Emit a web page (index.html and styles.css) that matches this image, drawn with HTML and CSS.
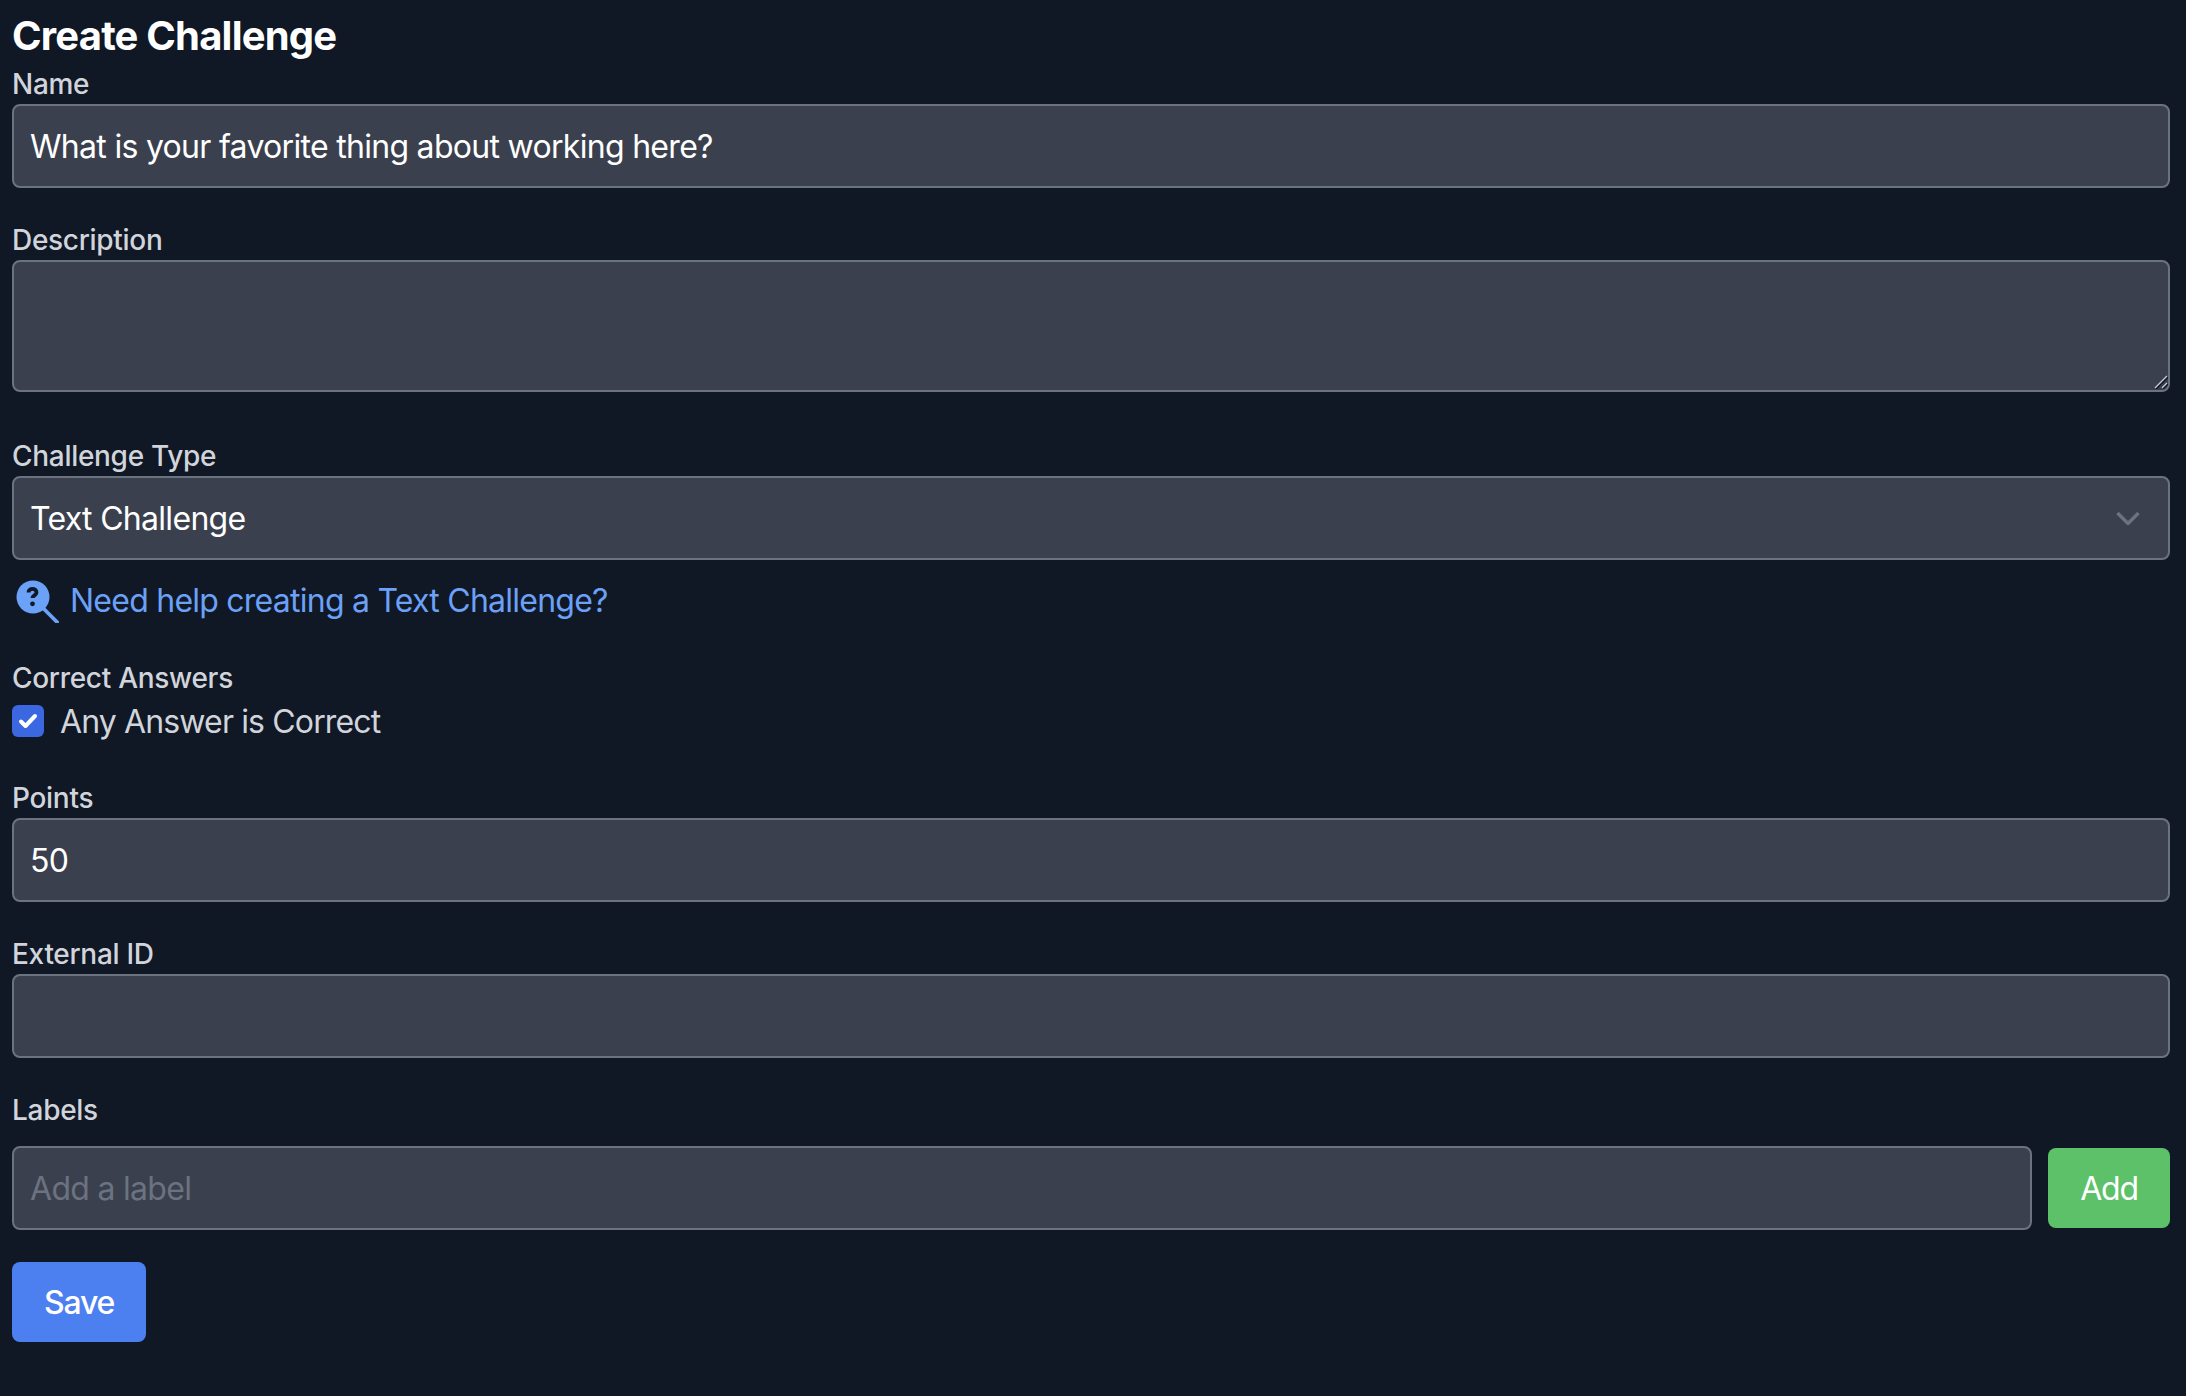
FILE: index.html
```html
<!DOCTYPE html>
<html lang="en">
<head>
  <meta charset="UTF-8" />
  <title>Create Challenge</title>
  <link rel="stylesheet" href="styles.css">
</head>
<body>
  <form class="challenge-form">
    <h1 class="form-title">Create Challenge</h1>

    <div class="field">
      <label class="field-label" for="name">Name</label>
      <input class="text-input" id="name" type="text" value="What is your favorite thing about working here?">
    </div>

    <div class="field field-description">
      <label class="field-label" for="description">Description</label>
      <div class="textarea-wrap">
        <textarea class="text-input text-area" id="description"></textarea>
        <svg class="resize-handle" width="14" height="14" viewBox="0 0 14 14" aria-hidden="true">
          <path d="M1 13 13 1M8 13l5-5" fill="none" stroke="#0f1420" stroke-width="2" transform="translate(.8 .8)"/>
          <path d="M1 13 13 1M8 13l5-5" fill="none" stroke="#c9ccd3" stroke-width="1.4"/>
        </svg>
      </div>
    </div>

    <div class="field-type">
      <label class="field-label" for="type">Challenge Type</label>
      <div class="select-wrap">
        <select class="text-input select-input" id="type">
          <option>Text Challenge</option>
          <option>Photo Challenge</option>
        </select>
        <svg class="select-arrow" width="24" height="14" viewBox="0 0 24 14" aria-hidden="true">
          <path d="M1.500 2 12 12.500 22.500 2" fill="none" stroke="#6b7280" stroke-width="3.400"/>
        </svg>
      </div>
    </div>

    <a class="help-link" href="#help">
      <svg class="help-icon" width="44" height="44" viewBox="0 0 44 44" aria-hidden="true">
        <circle cx="18" cy="18" r="16.5" fill="#6ba1f7"/>
        <path d="M29 30l13 13" stroke="#6ba1f7" stroke-width="3.800" stroke-linecap="round"/>
        <path d="M13.500 13.500c0-4.800 8-4.800 8 0 0 2.700-4 3-4 5.500" fill="none" stroke="#111827" stroke-width="3.800"/>
        <circle cx="17.500" cy="24.800" r="2.400" fill="#111827"/>
      </svg>
      <span class="help-text">Need help creating a Text Challenge?</span>
    </a>

    <div class="field-answers">
      <div class="field-label">Correct Answers</div>
      <label class="check-row">
        <span class="check-box">
          <svg width="20" height="16" viewBox="0 0 20 16" aria-hidden="true">
            <path d="M3 8.500l4.500 4.500L17 3" fill="none" stroke="#fff" stroke-width="4" stroke-linecap="round" stroke-linejoin="round"/>
          </svg>
        </span>
        <span>Any Answer is Correct</span>
      </label>
    </div>

    <div class="field">
      <label class="field-label" for="points">Points</label>
      <input class="text-input" id="points" type="text" value="50">
    </div>

    <div class="field">
      <label class="field-label" for="external">External ID</label>
      <input class="text-input" id="external" type="text">
    </div>

    <div class="field">
      <label class="field-label field-label-spaced" for="labels">Labels</label>
      <div class="label-row">
        <input class="text-input" id="labels" type="text" placeholder="Add a label">
        <button class="btn btn-add" type="button">Add</button>
      </div>
    </div>

    <button class="btn btn-save" type="button">Save</button>
  </form>
</body>
</html>
```
FILE: styles.css
```css
* {
  box-sizing: border-box;
}

html, body {
  margin: 0;
  height: 100%;
}

body {
  background: #101725;
  font-family: Inter, "Liberation Sans", sans-serif;
  color: #fff;
}

.challenge-form {
  padding: 8px 16px 0 12px;
}

.form-title {
  margin: 0;
  font-size: 40px;
  line-height: 56px;
  font-weight: 700;
  letter-spacing: -0.8px;
}

.field {
  margin-bottom: 32px;
}

.field-label {
  display: block;
  font-size: 28px;
  line-height: 40px;
  font-weight: 500;
  color: #d1d5db;
  letter-spacing: -0.3px;
}

.field-label-spaced {
  margin-bottom: 16px;
}

.text-input {
  display: block;
  width: 100%;
  height: 84px;
  padding: 0 16px;
  background: #3b404e;
  border: 2px solid #6b7280;
  border-radius: 8px;
  color: #fff;
  font-family: inherit;
  font-size: 32px;
  letter-spacing: -0.7px;
  outline: none;
}

.text-input::placeholder {
  color: #6b7280;
  opacity: 1;
}

.field-description {
  margin-bottom: 44px;
}

.textarea-wrap,
.select-wrap {
  position: relative;
}

.text-area {
  height: 132px;
  resize: none;
}

.resize-handle {
  position: absolute;
  right: 2px;
  bottom: 3px;
}

.select-input {
  appearance: none;
}

.select-arrow {
  position: absolute;
  right: 30px;
  top: 35px;
  pointer-events: none;
}

.help-link {
  display: flex;
  align-items: center;
  gap: 11px;
  height: 44px;
  margin: 19px 0 0 3px;
  color: #6ba1f7;
  font-size: 32px;
  letter-spacing: -0.76px;
  text-decoration: none;
}

.help-text {
  padding-bottom: 2px;
}

.field-answers {
  margin-top: 35px;
  margin-bottom: 34px;
}

.check-row {
  display: flex;
  align-items: center;
  gap: 16px;
  height: 46px;
  color: #d1d5db;
  font-size: 32px;
  letter-spacing: -0.86px;
}

.check-box {
  display: flex;
  align-items: center;
  justify-content: center;
  width: 32px;
  height: 32px;
  background: #3b68e0;
  border-radius: 6px;
}

.label-row {
  display: flex;
  align-items: center;
  gap: 16px;
}

.label-row .text-input {
  flex: 1;
}

.btn {
  height: 80px;
  border: none;
  border-radius: 8px;
  color: #fff;
  font-family: inherit;
  font-size: 32px;
  letter-spacing: -1.2px;
  cursor: pointer;
}

.btn-add {
  width: 122px;
  background: #5dc16a;
}

.btn-save {
  display: block;
  width: 134px;
  background: #4c80f0;
  font-weight: 500;
}
```
